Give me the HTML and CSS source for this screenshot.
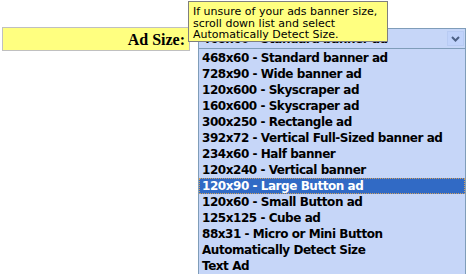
FILE: index.html
```html
<!DOCTYPE html>
<html>
<head>
  <meta name="viewport" content="width=device-width, initial-scale=1">
  <link rel="stylesheet" href="styles.css">
</head>
<body>

  <div class="form-row">
    <div class="label-cell">Ad Size:</div>
    <div class="size-picker">
      <div class="select-box">
        <span class="select-value">468x60 - Standard banner ad</span>
        <span class="select-arrow">
          <svg width="9" height="6" viewBox="0 0 9 6"><path d="M1 1 L4.5 4.5 L8 1" fill="none" stroke="#4d6185" stroke-width="2"/></svg>
        </span>
      </div>
      <ul class="option-list">
        <li>468x60 - Standard banner ad</li>
        <li>728x90 - Wide banner ad</li>
        <li>120x600 - Skyscraper ad</li>
        <li>160x600 - Skyscraper ad</li>
        <li>300x250 - Rectangle ad</li>
        <li>392x72 - Vertical Full-Sized banner ad</li>
        <li>234x60 - Half banner</li>
        <li>120x240 - Vertical banner</li>
        <li class="selected">120x90 - Large Button ad</li>
        <li>120x60 - Small Button ad</li>
        <li>125x125 - Cube ad</li>
        <li>88x31 - Micro or Mini Button</li>
        <li>Automatically Detect Size</li>
        <li>Text Ad</li>
      </ul>
    </div>
  </div>

  <div class="hint">If unsure of your ads banner size,<br>scroll down list and select<br>Automatically Detect Size.</div>

</body>
</html>
```

FILE: styles.css
```css
/* Base styling */
html, body {
  height: 274px;
  overflow: hidden;
}
body {
  margin: 0;
  padding: 0;
  background: #fff;
  position: relative;
}
/* Label + select row */
.form-row {
  display: flex;
  align-items: flex-start;
  padding: 27px 0 0 2px;
}
.label-cell {
  width: 182px;
  height: 22px;
  padding-right: 4px;
  background: #ffff80;
  border: 1px solid #c0c0c0;
  font-family: "Liberation Serif", serif;
  font-weight: bold;
  font-size: 16px;
  line-height: 24px;
  text-align: right;
}
.size-picker {
  position: relative;
  margin: 1px 0 0 8px;
  width: 268px;
}
/* Closed select */
.select-box {
  height: 19px;
  border: 1px solid #7f9db9;
  background: #c6d6f8;
  display: flex;
  align-items: center;
  font-family: "DejaVu Sans", sans-serif;
  font-weight: bold;
  font-size: 12px;
  letter-spacing: -0.45px;
}
.select-value {
  flex: 1;
  padding-left: 3px;
  color: #000;
}
.select-arrow {
  width: 17px;
  height: 15px;
  margin-right: 1px;
  background: #c1d3fb;
  border: 1px solid #b8cbf3;
  box-sizing: border-box;
  display: flex;
  align-items: center;
  justify-content: center;
}
/* Open list */
.option-list {
  list-style: none;
  margin: 0;
  padding: 1px 0 0;
  border: 1px solid #7f9db9;
  border-top: none;
  background: #c6d6f8;
  font-family: "DejaVu Sans", sans-serif;
  font-weight: bold;
  font-size: 12px;
  letter-spacing: -0.45px;
  height: 224px;
  overflow: hidden;
}
.option-list li {
  height: 16px;
  line-height: 16px;
  padding-left: 3px;
  color: #000;
  white-space: nowrap;
}
.option-list li.selected {
  background: #316ac5;
  color: #fff;
  outline: 1px dotted #d0a060;
  outline-offset: -1px;
}
/* Tooltip */
.hint {
  position: absolute;
  left: 188px;
  top: 1px;
  width: 190px;
  height: 34px;
  padding: 4px 4px 1px;
  background: #ffff80;
  border: 1px solid #7f7f7f;
  font-family: "DejaVu Sans", sans-serif;
  font-size: 11px;
  line-height: 11.5px;
  color: #000;
}
```
